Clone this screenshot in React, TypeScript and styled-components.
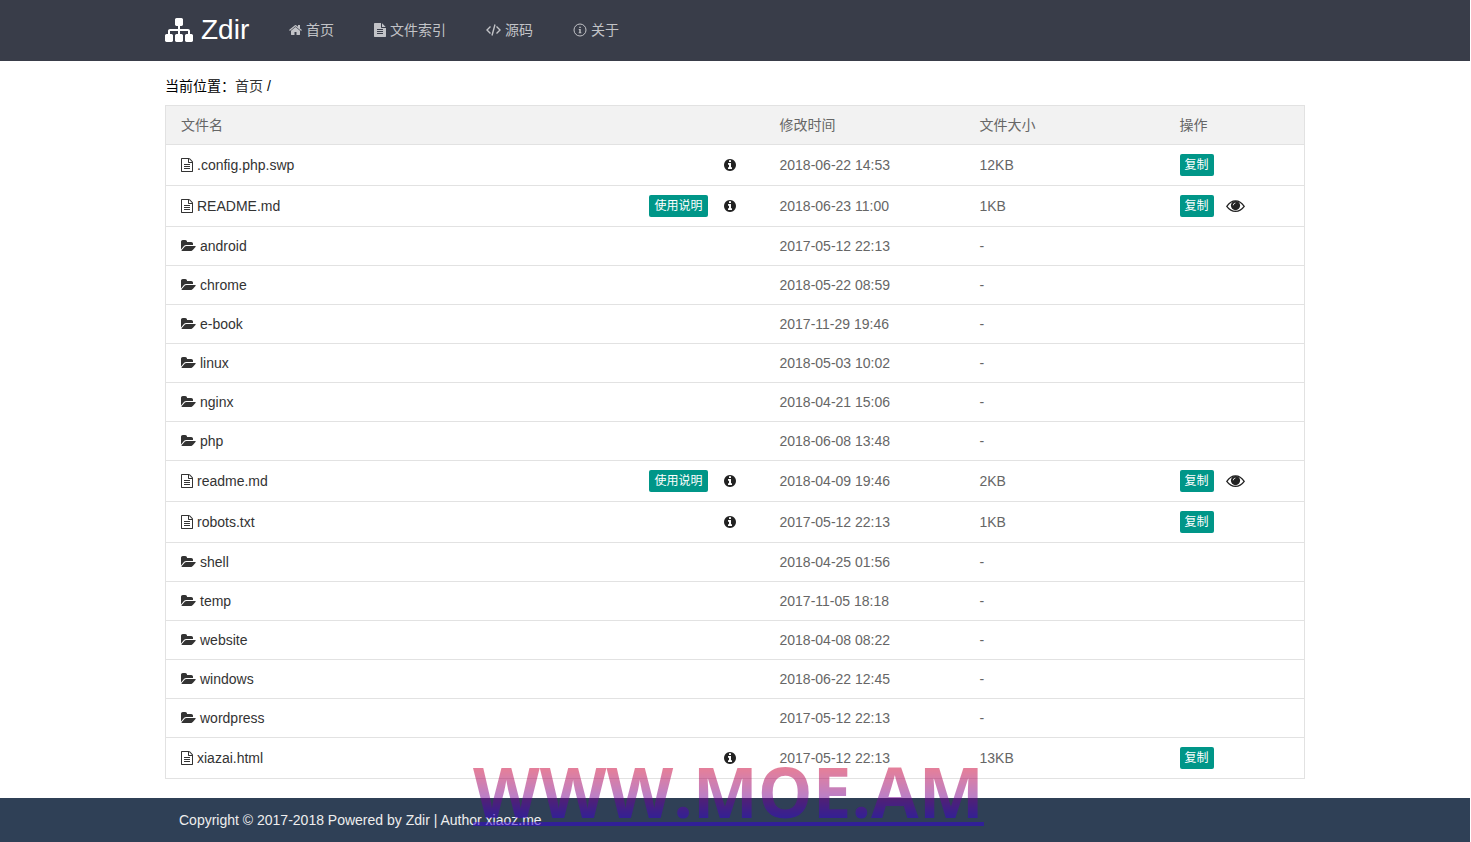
import React from "react";
import styled, { createGlobalStyle } from "styled-components";

const GlobalStyle = createGlobalStyle`
  * { box-sizing: border-box; }
  body {
    margin: 0 1px 0 0;
    background: #fff;
    color: #000;
    font: 14px/20px "Liberation Sans", Arial, "Noto Sans CJK SC", sans-serif;
  }
  a { color: #333; text-decoration: none; }
`;

const Container = styled.div`
  max-width: 1140px;
  margin: 0 auto;
`;

const Header = styled.header`
  padding-bottom: 1px;
  background: #393d49;
`;

const HeaderInner = styled(Container)`
  display: flex;
  align-items: center;
  height: 60px;
`;

const Logo = styled.a`
  display: flex;
  align-items: center;
  gap: 8px;
  width: 104px;
  color: #fff;
  font-size: 28px;
  line-height: 40px;
`;

const Nav = styled.nav`
  display: flex;
`;

const NavLink = styled.a`
  display: flex;
  align-items: center;
  gap: 4px;
  padding: 0 20px;
  color: #c2c3c7;
  line-height: 58px;
`;

const Glyph = styled.svg`
  display: block;
  flex: none;
  fill: currentColor;
`;

const Breadcrumb = styled.div`
  padding: 15px 0 9px;
`;

const Table = styled.table`
  width: 100%;
  table-layout: fixed;
  border-collapse: collapse;
  border: 1px solid #e2e2e2;
  color: #666;
  text-align: left;
`;

const HeadRow = styled.tr`
  background: #f2f2f2;
`;

const Row = styled.tr`
  border-top: 1px solid #e2e2e2;
`;

const HeadCell = styled.th<{ $width?: number }>`
  width: ${(p) => (p.$width ? `${p.$width}px` : "auto")};
  padding: 9px 15px;
  font-weight: 400;
`;

const Cell = styled.td`
  padding: 9px 15px;
`;

const Line = styled.div<{ $gap: number }>`
  display: flex;
  align-items: center;
  gap: ${(p) => p.$gap}px;
`;

const FileLink = styled.a`
  display: flex;
  align-items: center;
  gap: 4px;
  margin-right: auto;
`;

const IconButton = styled.button`
  padding: 0;
  border: 0;
  background: none;
  color: #222;
  cursor: pointer;
`;

const InfoButton = styled(IconButton)`
  margin-right: 14px;
`;

const SmallButton = styled.button`
  height: 22px;
  padding: 0 5px;
  border: 0;
  border-radius: 2px;
  background: #009688;
  color: #fff;
  font: inherit;
  font-size: 12px;
  line-height: 22px;
  cursor: pointer;
`;

const Footer = styled.footer`
  margin-top: 19px;
  background: #2f4056;
  color: #eee;
`;

const FooterInner = styled(Container)`
  padding: 12px 14px;
  a { color: #eee; }
`;

const Watermark = styled.div`
  position: fixed;
  left: 473px;
  bottom: 0;
  background: linear-gradient(#c80038 30px, #3400d8 80px);
  background-clip: text;
  -webkit-background-clip: text;
  color: transparent;
  opacity: 0.5;
  font: 700 69px/102px "Open Sans", sans-serif;
  text-decoration: underline;
  text-decoration-color: #3400d8;
  text-decoration-thickness: 4px;
  text-underline-offset: 4px;
  text-decoration-skip-ink: none;
  white-space: nowrap;
  pointer-events: none;
`;

const paths = {
  sitemap:
    "M1792 1248v320q0 40-28 68t-68 28h-320q-40 0-68-28t-28-68v-320q0-40 28-68t68-28h96v-192h-512v192h96q40 0 68 28t28 68v320q0 40-28 68t-68 28h-320q-40 0-68-28t-28-68v-320q0-40 28-68t68-28h96v-192h-512v192h96q40 0 68 28t28 68v320q0 40-28 68t-68 28h-320q-40 0-68-28t-28-68v-320q0-40 28-68t68-28h96v-192q0-52 38-90t90-38h512v-192h-96q-40 0-68-28t-28-68v-320q0-40 28-68t68-28h320q40 0 68 28t28 68v320q0 40-28 68t-68 28h-96v192h512q52 0 90 38t38 90v192h96q40 0 68 28t28 68z",
  home: "M1472 992v480q0 26-19 45t-45 19h-384v-384h-256v384h-384q-26 0-45-19t-19-45v-480q0-1 .5-3t.5-3l575-474 575 474q1 2 1 6zm223-69l-62 74q-8 9-21 11h-3q-13 0-21-7l-692-577-692 577q-12 8-24 7-13-2-21-11l-62-74q-8-10-7-23.5t11-21.5l719-599q32-26 76-26t76 26l244 204v-195q0-14 9-23t23-9h192q14 0 23 9t9 23v408l219 182q10 8 11 21.5t-7 23.5z",
  fileSolid:
    "M1596 476q14 14 28 36h-472v-472q22 14 36 28zm-476 164h544v1056q0 40-28 68t-68 28h-1344q-40 0-68-28t-28-68v-1600q0-40 28-68t68-28h800v544q0 40 28 68t68 28zm160 736v-64q0-14-9-23t-23-9h-704q-14 0-23 9t-9 23v64q0 14 9 23t23 9h704q14 0 23-9t9-23zm0-256v-64q0-14-9-23t-23-9h-704q-14 0-23 9t-9 23v64q0 14 9 23t23 9h704q14 0 23-9t9-23zm0-256v-64q0-14-9-23t-23-9h-704q-14 0-23 9t-9 23v64q0 14 9 23t23 9h704q14 0 23-9t9-23z",
  file: "M1596 380q28 28 48 76t20 88v1152q0 40-28 68t-68 28h-1344q-40 0-68-28t-28-68v-1600q0-40 28-68t68-28h896q40 0 88 20t76 48zm-444-244v376h376q-10-29-22-41l-313-313q-12-12-41-22zm384 1528v-1024h-416q-40 0-68-28t-28-68v-416h-768v1536h1280zm-1024-864q0-14 9-23t23-9h704q14 0 23 9t9 23v64q0 14-9 23t-23 9h-704q-14 0-23-9t-9-23v-64zm736 224q14 0 23 9t9 23v64q0 14-9 23t-23 9h-704q-14 0-23-9t-9-23v-64q0-14 9-23t23-9h704zm0 256q14 0 23 9t9 23v64q0 14-9 23t-23 9h-704q-14 0-23-9t-9-23v-64q0-14 9-23t23-9h704z",
  folder:
    "M1879 952q0 31-31 66l-336 396q-43 51-120.5 86.5t-143.5 35.5h-1088q-34 0-60.5-13t-26.5-43q0-31 31-66l336-396q43-51 120.5-86.5t143.5-35.5h1088q34 0 60.5 13t26.5 43zm-343-344v160h-832q-94 0-197 47.5t-164 119.5l-337 396-5 6q0-4-.5-12.5t-.5-12.5v-960q0-92 66-158t158-66h320q92 0 158 66t66 158v32h544q92 0 158 66t66 158z",
  info: "M1152 1376v-160q0-14-9-23t-23-9h-96v-512q0-14-9-23t-23-9h-320q-14 0-23 9t-9 23v160q0 14 9 23t23 9h96v320h-96q-14 0-23 9t-9 23v160q0 14 9 23t23 9h448q14 0 23-9t9-23zm-128-896v-160q0-14-9-23t-23-9h-192q-14 0-23 9t-9 23v160q0 14 9 23t23 9h192q14 0 23-9t9-23zm640 416q0 209-103 385.5t-279.5 279.5-385.5 103-385.5-103-279.5-279.5-103-385.5 103-385.5 279.5-279.5 385.5-103 385.5 103 279.5 279.5 103 385.5z",
};

type IconProps = { name: keyof typeof paths; width: number; height: number; box: string };

const Icon = ({ name, width, height, box }: IconProps) => (
  <Glyph width={width} height={height} viewBox={box} aria-hidden="true">
    <path d={paths[name]} />
  </Glyph>
);

const CodeIcon = () => (
  <Glyph width="15" height="14" viewBox="0 0 15 14" aria-hidden="true">
    <path d="M4.500 3.500 1 7l3.500 3.500M10.500 3.500 14 7l-3.500 3.500M9 1.500l-3 11" fill="none" stroke="currentColor" strokeWidth="1.400" />
  </Glyph>
);

const AboutIcon = () => (
  <Glyph width="14" height="14" viewBox="0 0 14 14" aria-hidden="true">
    <circle cx="7" cy="7" r="6" fill="none" stroke="currentColor" />
    <path d="M6.300 3.800h1.400v1.300H6.300zM5.700 6h2v3.400h.7v.8H5.600v-.8h.7V6.800h-.6z" />
  </Glyph>
);

const EyeIcon = () => (
  <Glyph width="19" height="14" viewBox="0 0 19 14" aria-hidden="true">
    <path d="M.8 7.300Q4.500 1.800 9.500 1.800T18.200 7.300Q14.500 12.400 9.500 12.400T.8 7.300z" fill="none" stroke="currentColor" strokeWidth="1.300" />
    <circle cx="9.500" cy="6.600" r="4.600" />
    <path d="M7.200 6.300q.2-2 2.200-2.300" fill="none" stroke="#fff" strokeWidth=".8" />
  </Glyph>
);

type Entry = { name: string; time: string; size?: string; readme?: boolean };

const entries: Entry[] = [
  { name: ".config.php.swp", time: "2018-06-22 14:53", size: "12KB" },
  { name: "README.md", time: "2018-06-23 11:00", size: "1KB", readme: true },
  { name: "android", time: "2017-05-12 22:13" },
  { name: "chrome", time: "2018-05-22 08:59" },
  { name: "e-book", time: "2017-11-29 19:46" },
  { name: "linux", time: "2018-05-03 10:02" },
  { name: "nginx", time: "2018-04-21 15:06" },
  { name: "php", time: "2018-06-08 13:48" },
  { name: "readme.md", time: "2018-04-09 19:46", size: "2KB", readme: true },
  { name: "robots.txt", time: "2017-05-12 22:13", size: "1KB" },
  { name: "shell", time: "2018-04-25 01:56" },
  { name: "temp", time: "2017-11-05 18:18" },
  { name: "website", time: "2018-04-08 08:22" },
  { name: "windows", time: "2018-06-22 12:45" },
  { name: "wordpress", time: "2017-05-12 22:13" },
  { name: "xiazai.html", time: "2017-05-12 22:13", size: "13KB" },
];

const EntryRow = ({ name, time, size, readme }: Entry) => (
  <Row>
    <Cell>
      <Line $gap={16}>
        <FileLink href="#">
          {size ? (
            <Icon name="file" width={12} height={14} box="128 0 1536 1792" />
          ) : (
            <Icon name="folder" width={15} height={14} box="0 0 1920 1792" />
          )}
          {name}
        </FileLink>
        {readme && <SmallButton type="button">使用说明</SmallButton>}
        {size && (
          <InfoButton type="button" aria-label="文件信息">
            <Icon name="info" width={12} height={12} box="128 128 1536 1536" />
          </InfoButton>
        )}
      </Line>
    </Cell>
    <Cell>{time}</Cell>
    <Cell>{size ?? "-"}</Cell>
    <Cell>
      {size && (
        <Line $gap={12}>
          <SmallButton type="button">复制</SmallButton>
          {readme && (
            <IconButton type="button" aria-label="预览">
              <EyeIcon />
            </IconButton>
          )}
        </Line>
      )}
    </Cell>
  </Row>
);

export default function App() {
  return (
    <>
      <GlobalStyle />
      <Header>
        <HeaderInner>
          <Logo href="#">
            <Icon name="sitemap" width={28} height={28} box="0 0 1792 1792" />
            Zdir
          </Logo>
          <Nav>
            <NavLink href="#">
              <Icon name="home" width={13} height={14} box="64 0 1664 1792" />
              首页
            </NavLink>
            <NavLink href="#">
              <Icon name="fileSolid" width={12} height={14} box="128 0 1536 1792" />
              文件索引
            </NavLink>
            <NavLink href="#">
              <CodeIcon />
              源码
            </NavLink>
            <NavLink href="#">
              <AboutIcon />
              关于
            </NavLink>
          </Nav>
        </HeaderInner>
      </Header>
      <Container as="main">
        <Breadcrumb>
          当前位置：<a href="#">首页</a> /
        </Breadcrumb>
        <Table>
          <thead>
            <HeadRow>
              <HeadCell>文件名</HeadCell>
              <HeadCell $width={200}>修改时间</HeadCell>
              <HeadCell $width={200}>文件大小</HeadCell>
              <HeadCell $width={140}>操作</HeadCell>
            </HeadRow>
          </thead>
          <tbody>
            {entries.map((entry) => (
              <EntryRow key={entry.name} {...entry} />
            ))}
          </tbody>
        </Table>
      </Container>
      <Footer>
        <FooterInner>
          Copyright © 2017-2018 Powered by <a href="#">Zdir</a> | Author <a href="#">xiaoz.me</a>
        </FooterInner>
      </Footer>
      <Watermark>WWW.MOE.AM</Watermark>
    </>
  );
}
